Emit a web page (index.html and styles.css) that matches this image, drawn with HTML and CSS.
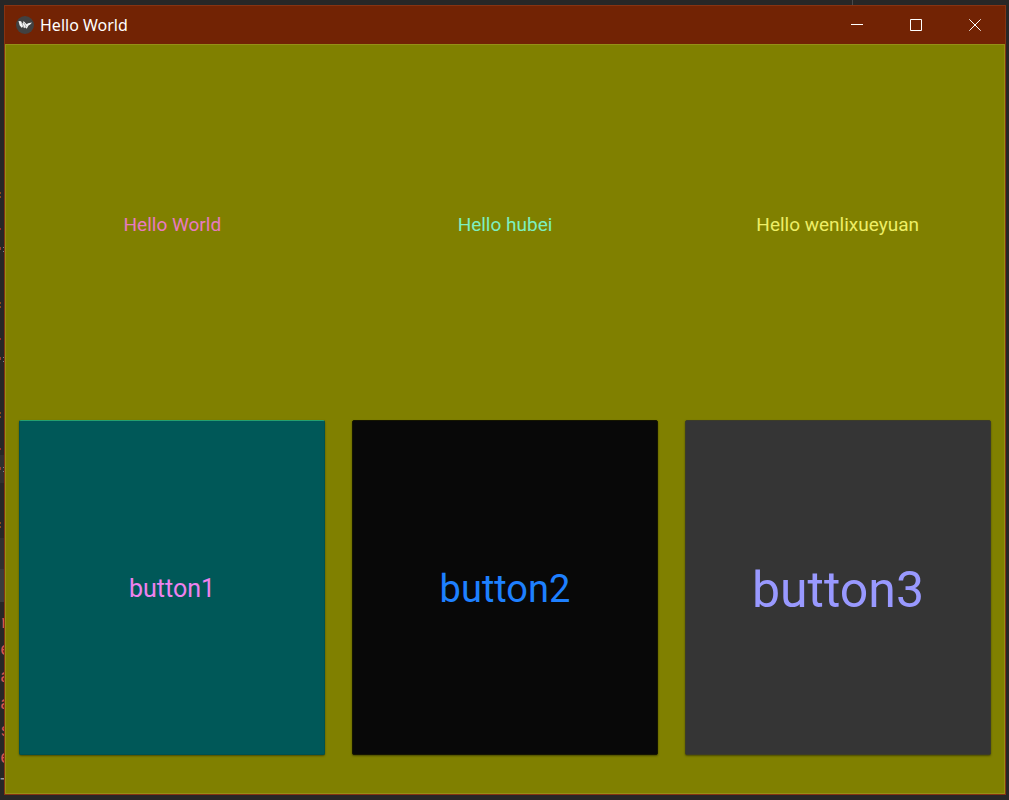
FILE: index.html
```html
<!DOCTYPE html>
<html lang="en">
<head>
<meta charset="utf-8">
<title>Hello World</title>
<link rel="stylesheet" href="styles.css">
</head>
<body>
<div class="desktop">
  <div class="editor" aria-hidden="true">
    <div class="marks"></div>
    <div class="line">r</div>
    <div class="line">e</div>
    <div class="line">a</div>
    <div class="line">a</div>
    <div class="line">s</div>
    <div class="line">e</div>
    <div class="line plain">T</div>
  </div>
  <div class="workspace">
    <div class="divider"></div>
    <main class="window">
      <header class="titlebar">
        <svg class="logo" viewBox="0 0 18 18" aria-hidden="true">
          <circle cx="9" cy="9" r="9" fill="#414141"/>
          <path d="M2.500 5l2.500.3 2 2.700L7.500 5l3.200 3.300L12 7.200l4-.6-1.800 2-1.700.8-1.800 3.400-1.500-1.500-.7 1L6.500 10.500 6 12 3.700 9.500z" fill="#f4f4f4"/>
          <path d="M5.500 6.500l2.500 5M8.200 7l2 4" stroke="#777" stroke-width=".6"/>
        </svg>
        <h1 class="title">Hello World</h1>
        <button class="control" aria-label="Minimize"><svg viewBox="0 0 12 12"><path d="M0 5.500h12"/></svg></button>
        <button class="control" aria-label="Maximize"><svg viewBox="0 0 12 12"><path d="M.5.5h11v11H.5z"/></svg></button>
        <button class="control" aria-label="Close"><svg viewBox="0 0 12 12"><path d="M.3.300l11.400 11.400M11.700.300L.3 11.700"/></svg></button>
      </header>
      <section class="content">
        <div class="row labels">
          <p class="pink">Hello World</p>
          <p class="mint">Hello hubei</p>
          <p class="yellow">Hello wenlixueyuan</p>
        </div>
        <div class="row buttons">
          <button class="tile teal">button1</button>
          <button class="tile black">button2</button>
          <button class="tile gray">button3</button>
        </div>
      </section>
    </main>
  </div>
</div>
</body>
</html>
```
FILE: styles.css
```css
* {
  box-sizing: border-box;
}

body {
  margin: 0;
  background: #272727;
  font-family: Roboto, sans-serif;
}

.desktop {
  display: flex;
  height: 100vh;
}

.editor {
  display: flex;
  flex-direction: column;
  width: 4px;
  overflow: hidden;
  background: linear-gradient(#272727 455px, #303030 455px, #303030 483px, #272727 483px, #272727 538px, #303030 538px, #303030 569px, #3a3b3d 569px, #3a3b3d 602px, #272727 602px);
}

.marks {
  flex: 1;
  margin: 192px 0 76px;
  background:
    repeating-linear-gradient(#8c4a1c 0 2px, transparent 2px 4px, #8c4a1c 4px 6px, transparent 6px 36px, #9e2a22 36px 38px, transparent 38px 55px, #a63a30 55px 58px, transparent 58px 110px) 0 0 / 1px 100% no-repeat,
    repeating-linear-gradient(transparent 0 55px, #77808a 55px 56px, transparent 56px 59px, #77808a 59px 60px, transparent 60px 110px) 3px 0 / 1px 100% no-repeat;
}

.line {
  height: 27px;
  color: #d9534f;
  font: 18px/24px "Liberation Mono", monospace;
}

.plain {
  color: #9a9a9a;
}

.workspace {
  display: flex;
  flex: 1;
  flex-direction: column;
  padding: 0 3px 5px 0;
}

.divider {
  height: 5px;
  margin-right: 153px;
  border-right: 1px solid #4a4a4a;
}

.window {
  display: flex;
  flex: 1;
  flex-direction: column;
  border: 1px solid #863312;
  background: #722304;
}

.titlebar {
  display: flex;
  align-items: center;
  height: 38px;
  padding: 0 1px 0 11px;
}

.logo {
  width: 18px;
  height: 18px;
}

.title {
  flex: 1;
  margin: 0 0 0 6px;
  color: #fff;
  font: 16px/24px "Noto Sans", sans-serif;
}

.control {
  display: flex;
  align-items: center;
  justify-content: center;
  width: 59px;
  height: 38px;
  padding: 0;
  border: 0;
  background: none;
}

.control svg {
  width: 12px;
  height: 12px;
  fill: none;
  stroke: #fff;
}

.content {
  display: grid;
  flex: 1;
  grid-template-rows: 1fr 1fr;
  padding-bottom: 24px;
  border: 1px solid #959017;
  background: #808000;
}

.row {
  display: grid;
  grid-template-columns: repeat(3, 1fr);
}

.labels {
  align-items: center;
  padding-bottom: 3px;
  font-size: 19px;
  line-height: 24px;
  text-align: center;
}

.labels p {
  margin: 0;
}

.pink {
  color: #e87bc0;
}

.mint {
  color: #7df0c0;
}

.yellow {
  color: #eeee66;
}

.buttons {
  gap: 27px;
  padding: 13px 13px 14px;
}

.tile {
  padding: 2px 0 0;
  border: 1px solid #00504f;
  border-radius: 2px;
  font-family: Roboto, sans-serif;
  box-shadow: 0 1px 2px #4a4a00;
}

.teal {
  border-top-color: #24a070;
  background: #005858;
  color: #ee82ee;
  font-size: 25px;
}

.black {
  border-color: #151500;
  background: #080808;
  color: #1e80ff;
  font-size: 38px;
}

.gray {
  padding-top: 4px;
  border-color: #3c3c28;
  background: #353535;
  color: #9999ff;
  font-size: 50px;
}
```
